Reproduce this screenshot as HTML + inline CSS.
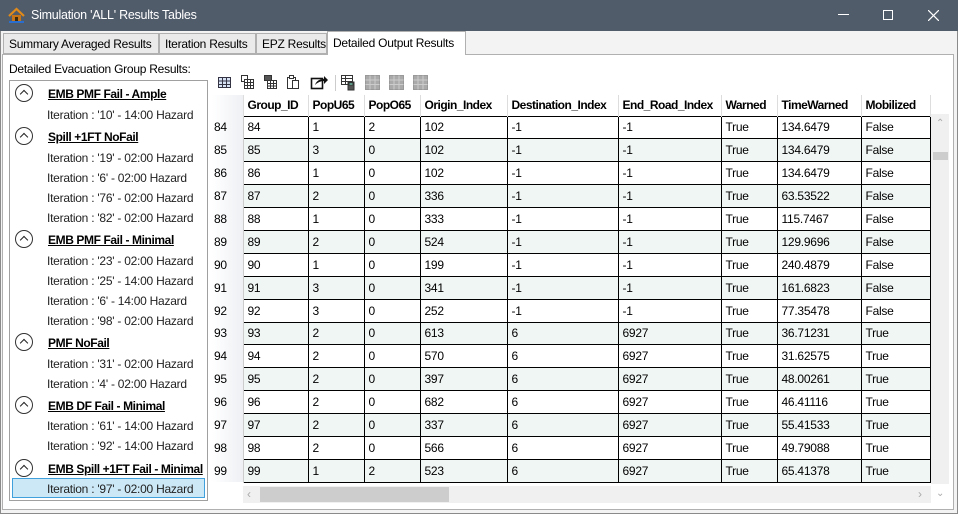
<!DOCTYPE html><html><head><style>
*{margin:0;padding:0;box-sizing:border-box}
body{width:958px;height:514px;position:relative;background:#f0f0f0;font-family:"Liberation Sans",sans-serif;font-size:12px;letter-spacing:-0.25px;color:#000;overflow:hidden}
.abs{position:absolute}
#title{left:0;top:0;width:958px;height:31px;background:#515c6b;color:#fff;font-size:12.5px}
#win{left:0;top:31px;width:958px;height:483px;border:1px solid #8a8a8a;border-top:none;background:#f3f3f3}
.tab{top:33px;height:21px;border:1px solid #b0b0b0;background:#eaeaea;padding:3px 0 0 5px;font-size:12px;white-space:nowrap;overflow:hidden}
#content{left:2px;top:54px;width:952px;height:456px;background:#fff;border:1px solid #b0b0b0}
.tree{left:9px;top:80px;width:199px;height:421px;border:1px solid #a0a0a0;background:#fff}
.h{position:absolute;left:38px;font-weight:bold;text-decoration:underline;font-size:12px;white-space:nowrap;letter-spacing:-0.4px}
.c{position:absolute;left:5px;width:18px;height:18px;border:1.3px solid #333;border-radius:50%}
.c:after{content:"";position:absolute;left:5px;top:6px;width:5px;height:5px;border-left:1.8px solid #222;border-top:1.8px solid #222;transform:rotate(45deg)}
.i{position:absolute;left:37px;color:#222;white-space:nowrap}
table{position:absolute;left:212px;top:95px;border-collapse:collapse;table-layout:fixed;font-size:12px}
td,th{height:23px;padding:0 0 0 4px;text-align:left;white-space:nowrap;overflow:hidden}
th{border-right:1px solid #ddd;font-weight:bold;height:21px;background:#fff;padding-left:4px;letter-spacing:-0.5px}
td{border:1px solid #000;height:22.9px}
td.rh{border:none;border-right:1px solid #ccc;background:linear-gradient(90deg,#fff,#eef0f4);padding-left:2px}
tr.a td:not(.rh){background:#f0f6f3}
</style></head><body>
<div id="title" class="abs">
<svg class="abs" style="left:8px;top:7px" width="17" height="17" viewBox="0 0 17 17"><path d="M1 9L8.5 2L16 9" fill="none" stroke="#e08a1a" stroke-width="2.2"/><rect x="4" y="8" width="9" height="6" fill="#c77416"/><rect x="7" y="10" width="3" height="4" fill="#3a2a10"/><path d="M1 15h15" stroke="#2a6fd0" stroke-width="2"/></svg>
<div class="abs" style="left:31px;top:8px">Simulation 'ALL' Results Tables</div>
<div class="abs" style="left:838px;top:14px;width:11px;height:1px;background:#fff"></div>
<div class="abs" style="left:883px;top:10px;width:10px;height:10px;border:1px solid #fff"></div>
<svg class="abs" style="left:928px;top:10px" width="11" height="11"><path d="M0 0L11 11M11 0L0 11" stroke="#fff" stroke-width="1.2"/></svg>
</div>
<div id="win" class="abs"></div>
<div id="content" class="abs"></div>
<div class="abs tab" style="left:3px;width:156px">Summary Averaged Results</div>
<div class="abs tab" style="left:159px;width:97px">Iteration Results</div>
<div class="abs tab" style="left:256px;width:71px">EPZ Results</div>
<div class="abs tab" style="left:327px;top:31px;height:24px;width:139px;background:#fff;border-bottom:none;padding-top:4px">Detailed Output Results</div>
<div class="abs" style="left:9px;top:62px">Detailed Evacuation Group Results:</div>
<div class="abs tree">
<div class="c" style="top:3px"></div><div class="h" style="top:6px">EMB PMF Fail - Ample</div>
<div class="i" style="top:27px">Iteration : '10' - 14:00 Hazard</div>
<div class="c" style="top:46px"></div><div class="h" style="top:49px">Spill +1FT NoFail</div>
<div class="i" style="top:70px">Iteration : '19' - 02:00 Hazard</div>
<div class="i" style="top:90px">Iteration : '6' - 02:00 Hazard</div>
<div class="i" style="top:110px">Iteration : '76' - 02:00 Hazard</div>
<div class="i" style="top:130px">Iteration : '82' - 02:00 Hazard</div>
<div class="c" style="top:149px"></div><div class="h" style="top:152px">EMB PMF Fail - Minimal</div>
<div class="i" style="top:173px">Iteration : '23' - 02:00 Hazard</div>
<div class="i" style="top:193px">Iteration : '25' - 14:00 Hazard</div>
<div class="i" style="top:213px">Iteration : '6' - 14:00 Hazard</div>
<div class="i" style="top:233px">Iteration : '98' - 02:00 Hazard</div>
<div class="c" style="top:252px"></div><div class="h" style="top:255px">PMF NoFail</div>
<div class="i" style="top:276px">Iteration : '31' - 02:00 Hazard</div>
<div class="i" style="top:296px">Iteration : '4' - 02:00 Hazard</div>
<div class="c" style="top:315px"></div><div class="h" style="top:318px">EMB DF Fail - Minimal</div>
<div class="i" style="top:338px">Iteration : '61' - 14:00 Hazard</div>
<div class="i" style="top:358px">Iteration : '92' - 14:00 Hazard</div>
<div class="c" style="top:378px"></div><div class="h" style="top:381px">EMB Spill +1FT Fail - Minimal</div>
<div class="abs" style="left:2px;top:397px;width:193px;height:20px;background:#cce8f7;border:1px solid #3fa0dc"></div>
<div class="i" style="top:401px">Iteration : '97' - 02:00 Hazard</div>
</div>
<svg class="abs" style="left:215px;top:72px" width="220" height="20">
<g stroke="#334" stroke-width="1"><rect x="3.5" y="5.5" width="12" height="10" fill="#d8e4f6"/><path d="M3.5 9h12M3.5 12.5h12M7.5 5.5v10M11.5 5.5v10" fill="none"/></g>
<g fill="#fff" stroke="#333"><rect x="26.5" y="3.5" width="6" height="6"/><rect x="29.5" y="7.5" width="9" height="9"/><path d="M29.5 10.5h9M29.5 13.5h9M32.5 7.5v9M35.5 7.5v9"/></g>
<g stroke="#333"><rect x="49.5" y="3.5" width="7" height="5" fill="#555"/><rect x="52.5" y="8.5" width="9" height="8" fill="#fff"/><path d="M52.5 11.5h9M52.5 14h9M55.5 8.5v8M58.5 8.5v8"/></g>
<g fill="#fff" stroke="#333"><rect x="72.5" y="5.5" width="8" height="11"/><rect x="77.5" y="8.5" width="6" height="8"/><rect x="74.5" y="3.5" width="4" height="3"/></g>
<g><rect x="96.5" y="6.5" width="11" height="10" fill="#fff" stroke="#111" stroke-width="1.6"/><path d="M100 13Q102 7 109 7V4L113 8L109 12V9Q104 9 100 13Z" fill="#111"/></g>
<path d="M120.5 3v16" stroke="#ccc"/>
<g stroke="#333"><rect x="126.5" y="3.5" width="11" height="9" fill="#fff"/><path d="M126.5 6.5h11M126.5 9.5h11M130.5 3.5v9"/><rect x="133" y="10" width="6" height="8" fill="#555"/><rect x="134" y="11" width="4" height="2" fill="#8fd"/></g>
<g fill="#aaa" stroke="#999"><rect x="150.5" y="3.5" width="14" height="14"/><rect x="174.5" y="3.5" width="14" height="14"/><rect x="198.5" y="3.5" width="14" height="14"/></g>
<path d="M150.5 8h14M150.5 12.5h14M155 3.5v14M160 3.5v14M174.5 8h14M174.5 12.5h14M179 3.5v14M184 3.5v14M198.5 8h14M198.5 12.5h14M203 3.5v14M208 3.5v14" stroke="#ccc"/>
</svg>
<div class="abs" style="left:212px;top:95px;width:718px;height:389px;background:#fff"></div>
<table>
<colgroup><col style="width:31px"><col style="width:65px"><col style="width:56px"><col style="width:56px"><col style="width:87px"><col style="width:111px"><col style="width:103px"><col style="width:56px"><col style="width:84px"><col style="width:69px"></colgroup>
<tr><th style="background:linear-gradient(90deg,#fff,#eef0f4)"></th><th>Group_ID</th><th>PopU65</th><th>PopO65</th><th>Origin_Index</th><th>Destination_Index</th><th>End_Road_Index</th><th>Warned</th><th>TimeWarned</th><th>Mobilized</th></tr>
<tr><td class="rh">84</td><td>84</td><td>1</td><td>2</td><td>102</td><td>-1</td><td>-1</td><td>True</td><td>134.6479</td><td>False</td></tr>
<tr class="a"><td class="rh">85</td><td>85</td><td>3</td><td>0</td><td>102</td><td>-1</td><td>-1</td><td>True</td><td>134.6479</td><td>False</td></tr>
<tr><td class="rh">86</td><td>86</td><td>1</td><td>0</td><td>102</td><td>-1</td><td>-1</td><td>True</td><td>134.6479</td><td>False</td></tr>
<tr class="a"><td class="rh">87</td><td>87</td><td>2</td><td>0</td><td>336</td><td>-1</td><td>-1</td><td>True</td><td>63.53522</td><td>False</td></tr>
<tr><td class="rh">88</td><td>88</td><td>1</td><td>0</td><td>333</td><td>-1</td><td>-1</td><td>True</td><td>115.7467</td><td>False</td></tr>
<tr class="a"><td class="rh">89</td><td>89</td><td>2</td><td>0</td><td>524</td><td>-1</td><td>-1</td><td>True</td><td>129.9696</td><td>False</td></tr>
<tr><td class="rh">90</td><td>90</td><td>1</td><td>0</td><td>199</td><td>-1</td><td>-1</td><td>True</td><td>240.4879</td><td>False</td></tr>
<tr class="a"><td class="rh">91</td><td>91</td><td>3</td><td>0</td><td>341</td><td>-1</td><td>-1</td><td>True</td><td>161.6823</td><td>False</td></tr>
<tr><td class="rh">92</td><td>92</td><td>3</td><td>0</td><td>252</td><td>-1</td><td>-1</td><td>True</td><td>77.35478</td><td>False</td></tr>
<tr class="a"><td class="rh">93</td><td>93</td><td>2</td><td>0</td><td>613</td><td>6</td><td>6927</td><td>True</td><td>36.71231</td><td>True</td></tr>
<tr><td class="rh">94</td><td>94</td><td>2</td><td>0</td><td>570</td><td>6</td><td>6927</td><td>True</td><td>31.62575</td><td>True</td></tr>
<tr class="a"><td class="rh">95</td><td>95</td><td>2</td><td>0</td><td>397</td><td>6</td><td>6927</td><td>True</td><td>48.00261</td><td>True</td></tr>
<tr><td class="rh">96</td><td>96</td><td>2</td><td>0</td><td>682</td><td>6</td><td>6927</td><td>True</td><td>46.41116</td><td>True</td></tr>
<tr class="a"><td class="rh">97</td><td>97</td><td>2</td><td>0</td><td>337</td><td>6</td><td>6927</td><td>True</td><td>55.41533</td><td>True</td></tr>
<tr><td class="rh">98</td><td>98</td><td>2</td><td>0</td><td>566</td><td>6</td><td>6927</td><td>True</td><td>49.79088</td><td>True</td></tr>
<tr class="a"><td class="rh">99</td><td>99</td><td>1</td><td>2</td><td>523</td><td>6</td><td>6927</td><td>True</td><td>65.41378</td><td>True</td></tr>
</table>
<div class="abs" style="left:931px;top:114px;width:18px;height:370px;background:#f0f0f0"></div>
<div class="abs" style="left:933px;top:152px;width:15px;height:8px;background:#cdcdcd"></div>
<div class="abs" style="left:936px;top:118px;color:#aaa;font-size:10px">&#8963;</div>
<div class="abs" style="left:243px;top:486px;width:688px;height:17px;background:#f0f0f0"></div>
<div class="abs" style="left:260px;top:487px;width:189px;height:15px;background:#cdcdcd"></div>
<div class="abs" style="left:247px;top:487px;color:#aaa;font-size:12px">&lsaquo;</div>
<div class="abs" style="left:918px;top:487px;color:#aaa;font-size:12px">&rsaquo;</div>
<div class="abs" style="left:936px;top:488px;color:#aaa;font-size:10px">&#8964;</div>
</body></html>
